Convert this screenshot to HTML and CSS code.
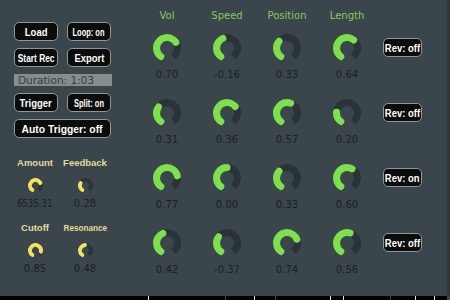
FILE: index.html
```html
<!DOCTYPE html>
<html lang="en">
<head>
<meta charset="UTF-8">
<meta name="viewport" content="width=device-width, initial-scale=1.0">
<title>Looper</title>
<link rel="stylesheet" href="styles.css">
</head>
<body>

<div class="app">
    <div class="side">
        <div class="transport">
            <button class="btn"><span class="fit">Load</span></button>
            <button class="btn"><span class="fit tight">Loop: on</span></button>
            <button class="btn"><span class="fit narrow">Start Rec</span></button>
            <button class="btn"><span class="fit">Export</span></button>
            <div class="duration">Duration: 1:03</div>
            <button class="btn"><span class="fit">Trigger</span></button>
            <button class="btn"><span class="fit tight">Split: on</span></button>
            <button class="btn wide"><span class="fit loose">Auto Trigger: off</span></button>
        </div>

        <div class="fx">
            <div class="fx-item">
                <span class="fx-label">Amount</span>
                <svg class="knob small" viewBox="0 0 15 15"><circle class="track" cx="7.5" cy="7.5" r="5.5" pathLength="100" stroke-dasharray="80 100"/><circle class="fill" cx="7.5" cy="7.5" r="5.5" pathLength="100" stroke-dasharray="57.6 100"/></svg>
                <span class="value"><span class="fit">6535.31</span></span>
            </div>
            <div class="fx-item">
                <span class="fx-label">Feedback</span>
                <svg class="knob small" viewBox="0 0 15 15"><circle class="track" cx="7.5" cy="7.5" r="5.5" pathLength="100" stroke-dasharray="80 100"/><circle class="fill" cx="7.5" cy="7.5" r="5.5" pathLength="100" stroke-dasharray="22.4 100"/></svg>
                <span class="value">0.28</span>
            </div>
            <div class="fx-item">
                <span class="fx-label">Cutoff</span>
                <svg class="knob small" viewBox="0 0 15 15"><circle class="track" cx="7.5" cy="7.5" r="5.5" pathLength="100" stroke-dasharray="80 100"/><circle class="fill" cx="7.5" cy="7.5" r="5.5" pathLength="100" stroke-dasharray="68 100"/></svg>
                <span class="value">0.85</span>
            </div>
            <div class="fx-item">
                <span class="fx-label"><span class="fit">Resonance</span></span>
                <svg class="knob small" viewBox="0 0 15 15"><circle class="track" cx="7.5" cy="7.5" r="5.5" pathLength="100" stroke-dasharray="80 100"/><circle class="fill" cx="7.5" cy="7.5" r="5.5" pathLength="100" stroke-dasharray="38.4 100"/></svg>
                <span class="value">0.48</span>
            </div>
        </div>
    </div>

    <div class="tracks">
        <div class="heads">
            <span>Vol</span>
            <span>Speed</span>
            <span>Position</span>
            <span>Length</span>
        </div>

        <div class="rows">
            <!-- track 1 -->
            <div class="cell"><svg class="knob" viewBox="0 0 28 28"><circle class="track" cx="14" cy="14" r="10.5" pathLength="100" stroke-dasharray="80 100"/><circle class="fill" cx="14" cy="14" r="10.5" pathLength="100" stroke-dasharray="56 100"/></svg><span class="value">0.70</span></div>
            <div class="cell"><svg class="knob" viewBox="0 0 28 28"><circle class="track" cx="14" cy="14" r="10.5" pathLength="100" stroke-dasharray="80 100"/><circle class="fill" cx="14" cy="14" r="10.5" pathLength="100" stroke-dasharray="33.6 100"/></svg><span class="value">-0.16</span></div>
            <div class="cell"><svg class="knob" viewBox="0 0 28 28"><circle class="track" cx="14" cy="14" r="10.5" pathLength="100" stroke-dasharray="80 100"/><circle class="fill" cx="14" cy="14" r="10.5" pathLength="100" stroke-dasharray="26.4 100"/></svg><span class="value">0.33</span></div>
            <div class="cell"><svg class="knob" viewBox="0 0 28 28"><circle class="track" cx="14" cy="14" r="10.5" pathLength="100" stroke-dasharray="80 100"/><circle class="fill" cx="14" cy="14" r="10.5" pathLength="100" stroke-dasharray="51.2 100"/></svg><span class="value">0.64</span></div>
            <button class="btn rev"><span class="fit">Rev: off</span></button>

            <!-- track 2 -->
            <div class="cell"><svg class="knob" viewBox="0 0 28 28"><circle class="track" cx="14" cy="14" r="10.5" pathLength="100" stroke-dasharray="80 100"/><circle class="fill" cx="14" cy="14" r="10.5" pathLength="100" stroke-dasharray="24.8 100"/></svg><span class="value">0.31</span></div>
            <div class="cell"><svg class="knob" viewBox="0 0 28 28"><circle class="track" cx="14" cy="14" r="10.5" pathLength="100" stroke-dasharray="80 100"/><circle class="fill" cx="14" cy="14" r="10.5" pathLength="100" stroke-dasharray="54.4 100"/></svg><span class="value">0.36</span></div>
            <div class="cell"><svg class="knob" viewBox="0 0 28 28"><circle class="track" cx="14" cy="14" r="10.5" pathLength="100" stroke-dasharray="80 100"/><circle class="fill" cx="14" cy="14" r="10.5" pathLength="100" stroke-dasharray="45.6 100"/></svg><span class="value">0.57</span></div>
            <div class="cell"><svg class="knob" viewBox="0 0 28 28"><circle class="track" cx="14" cy="14" r="10.5" pathLength="100" stroke-dasharray="80 100"/><circle class="fill" cx="14" cy="14" r="10.5" pathLength="100" stroke-dasharray="16 100"/></svg><span class="value">0.20</span></div>
            <button class="btn rev"><span class="fit">Rev: off</span></button>

            <!-- track 3 -->
            <div class="cell"><svg class="knob" viewBox="0 0 28 28"><circle class="track" cx="14" cy="14" r="10.5" pathLength="100" stroke-dasharray="80 100"/><circle class="fill" cx="14" cy="14" r="10.5" pathLength="100" stroke-dasharray="61.6 100"/></svg><span class="value">0.77</span></div>
            <div class="cell"><svg class="knob" viewBox="0 0 28 28"><circle class="track" cx="14" cy="14" r="10.5" pathLength="100" stroke-dasharray="80 100"/><circle class="fill" cx="14" cy="14" r="10.5" pathLength="100" stroke-dasharray="40 100"/></svg><span class="value">0.00</span></div>
            <div class="cell"><svg class="knob" viewBox="0 0 28 28"><circle class="track" cx="14" cy="14" r="10.5" pathLength="100" stroke-dasharray="80 100"/><circle class="fill" cx="14" cy="14" r="10.5" pathLength="100" stroke-dasharray="26.4 100"/></svg><span class="value">0.33</span></div>
            <div class="cell"><svg class="knob" viewBox="0 0 28 28"><circle class="track" cx="14" cy="14" r="10.5" pathLength="100" stroke-dasharray="80 100"/><circle class="fill" cx="14" cy="14" r="10.5" pathLength="100" stroke-dasharray="48 100"/></svg><span class="value">0.60</span></div>
            <button class="btn rev"><span class="fit">Rev: on</span></button>

            <!-- track 4 -->
            <div class="cell"><svg class="knob" viewBox="0 0 28 28"><circle class="track" cx="14" cy="14" r="10.5" pathLength="100" stroke-dasharray="80 100"/><circle class="fill" cx="14" cy="14" r="10.5" pathLength="100" stroke-dasharray="33.6 100"/></svg><span class="value">0.42</span></div>
            <div class="cell"><svg class="knob" viewBox="0 0 28 28"><circle class="track" cx="14" cy="14" r="10.5" pathLength="100" stroke-dasharray="80 100"/><circle class="fill" cx="14" cy="14" r="10.5" pathLength="100" stroke-dasharray="25.2 100"/></svg><span class="value">-0.37</span></div>
            <div class="cell"><svg class="knob" viewBox="0 0 28 28"><circle class="track" cx="14" cy="14" r="10.5" pathLength="100" stroke-dasharray="80 100"/><circle class="fill" cx="14" cy="14" r="10.5" pathLength="100" stroke-dasharray="59.2 100"/></svg><span class="value">0.74</span></div>
            <div class="cell"><svg class="knob" viewBox="0 0 28 28"><circle class="track" cx="14" cy="14" r="10.5" pathLength="100" stroke-dasharray="80 100"/><circle class="fill" cx="14" cy="14" r="10.5" pathLength="100" stroke-dasharray="44.8 100"/></svg><span class="value">0.56</span></div>
            <button class="btn rev"><span class="fit">Rev: off</span></button>
        </div>
    </div>
</div>

<div class="timeline">
    <span class="tick" style="left: 148px"></span>
    <span class="tick mark" style="left: 225px"></span>
    <span class="tick" style="left: 254px"></span>
    <span class="tick mark" style="left: 275px"></span>
    <span class="tick" style="left: 330px"></span>
    <span class="tick" style="left: 343px"></span>
    <span class="tick mark" style="left: 390px"></span>
    <span class="tick" style="left: 415px"></span>
    <span class="tick" style="left: 434px"></span>
</div>

</body>
</html>
```

FILE: styles.css
```css
body {
    margin: 0;
    width: 450px;
    height: 300px;
    overflow: hidden;
    background-color: #3a464c;
    font-family: "DejaVu Sans", sans-serif;
}

.app {
    display: flex;
    height: 296px;
    box-sizing: border-box;
    border-right: 3px solid #2e383d;
}

/* left column: transport buttons + fx knobs */
.side {
    width: 98px;
    padding: 22px 0 0 14px;
}

.transport {
    display: grid;
    grid-template-columns: 44px 44px;
    grid-template-rows: 19px 19px 12px 19px 19px;
    column-gap: 9px;
    row-gap: 7px;
}

.btn {
    display: flex;
    align-items: center;
    justify-content: center;
    margin: 0;
    padding: 0;
    background-color: #0b0c0c;
    color: #ffffff;
    border: 1px solid #8e989b;
    border-radius: 5px;
    font-family: "Liberation Sans", Arial, sans-serif;
    font-weight: bold;
    font-size: 11px;
    white-space: nowrap;
    overflow: visible;
}

.btn.wide {
    grid-column: 1 / -1;
}

/* text squeezed to fit its box, like the original toolkit does */
.fit {
    display: inline-block;
    transform: scaleX(0.86);
}

.fit.tight {
    transform: scaleX(0.68);
}

.fit.narrow {
    transform: scaleX(0.76);
}

.fit.loose {
    transform: scaleX(0.94);
}

.duration {
    grid-column: 1 / -1;
    width: 98px;
    background-color: #878c8d;
    color: #363c3f;
    font-size: 10.5px;
    line-height: 12px;
    padding-left: 4px;
    box-sizing: border-box;
}

.fx {
    display: grid;
    grid-template-columns: 50px 50px;
    row-gap: 12px;
    margin: 19px 0 0 -4px;
}

.fx-item {
    display: flex;
    flex-direction: column;
    align-items: center;
}

.fx-label {
    font-family: "Liberation Sans", Arial, sans-serif;
    font-weight: bold;
    font-size: 9.5px;
    line-height: 11px;
    color: #e4da9c;
    white-space: nowrap;
}

.value {
    font-size: 10px;
    line-height: 12px;
    color: #1b2023;
    white-space: nowrap;
}

/* knobs: 288 degree arc starting at the bottom left */
.knob {
    display: block;
    width: 28px;
    height: 28px;
    transform: rotate(126deg);
    fill: none;
}

.knob circle {
    stroke-width: 7;
}

.knob .track {
    stroke: #2a3337;
}

.knob .fill {
    stroke: #7ee04c;
    stroke-linecap: round;
}

.knob.small {
    width: 15px;
    height: 15px;
    margin: 10px 0 5px;
}

.knob.small circle {
    stroke-width: 4;
}

.knob.small .fill {
    stroke: #f1e15c;
}

/* right side: four sample tracks */
.tracks {
    margin-left: 25px;
    padding-top: 10px;
}

.heads {
    display: grid;
    grid-template-columns: repeat(4, 60px);
    margin-bottom: 12px;
    font-size: 10px;
    line-height: 12px;
    color: #89c85a;
    text-align: center;
}

.rows {
    display: grid;
    grid-template-columns: repeat(4, 60px) 45px;
    grid-auto-rows: 47px;
    row-gap: 18px;
}

.cell {
    display: flex;
    flex-direction: column;
    align-items: center;
    gap: 7px;
}

.rev {
    height: 19px;
    margin: 4px 0 0 6px;
}

.timeline {
    position: relative;
    height: 4px;
    width: 447px;
    background-color: #000000;
}

.tick {
    position: absolute;
    top: 0;
    width: 1px;
    height: 4px;
    background-color: #e8e8e8;
}

.tick.mark {
    background-color: #7a2a36;
}
```
